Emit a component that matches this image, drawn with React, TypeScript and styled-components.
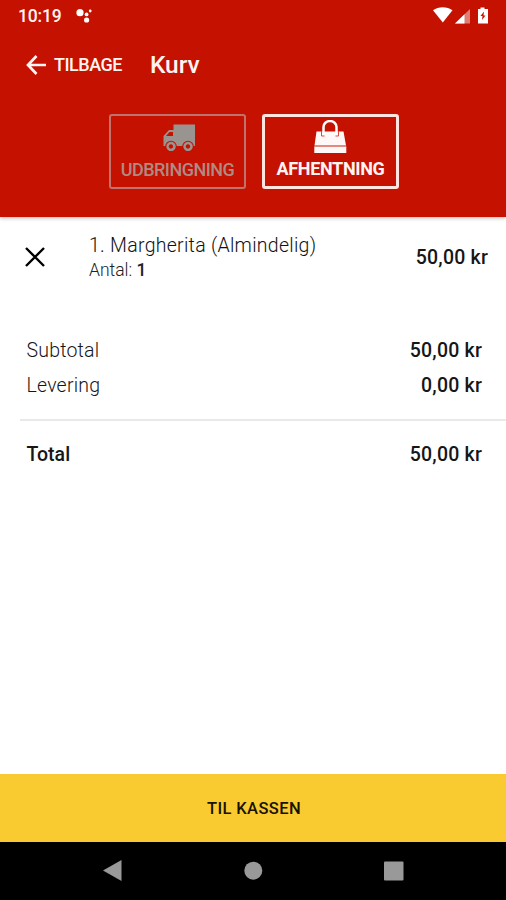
import React from "react";
import styled, { createGlobalStyle } from "styled-components";

const GlobalStyle = createGlobalStyle`
  *, *::before, *::after { box-sizing: border-box; }
  body { margin: 0; background: #fff; font-family: Roboto, sans-serif; }
  button { font-family: inherit; margin: 0; padding: 0; border: 0; background: none; cursor: pointer; }
  svg { display: block; flex: none; }
`;

const Screen = styled.div`
  display: flex;
  flex-direction: column;
  width: 506px;
  height: 900px;
  overflow: hidden;
  background: #fff;
  color: #161616;
`;

const Header = styled.header`
  flex: none;
  height: 217px;
  background: #c51100;
  color: #fff4f2;
  box-shadow: 0 1px 4px rgba(0, 0, 0, 0.3);
`;

const StatusBar = styled.div`
  display: flex;
  align-items: center;
  height: 32px;
  padding: 0 16px 0 18px;
`;

const Clock = styled.span`
  width: 58px;
  font-size: 17.5px;
  font-weight: 500;
  letter-spacing: -0.15px;
  line-height: 32px;
`;

const StatusIcons = styled.div`
  margin-left: auto;
  display: flex;
`;

const TitleBar = styled.div`
  display: flex;
  align-items: center;
  height: 65px;
  padding-left: 26px;
`;

const BackButton = styled.button`
  display: flex;
  align-items: center;
  gap: 7px;
  width: 124px;
  color: inherit;
  font-size: 18px;
  font-weight: 500;
  letter-spacing: -0.5px;
`;

const Title = styled.h1`
  margin: 0;
  font-size: 24.5px;
  font-weight: 500;
  letter-spacing: -0.1px;
`;

const Modes = styled.div`
  display: flex;
  justify-content: center;
  gap: 16px;
  padding-top: 17px;
  padding-left: 2px;
`;

const ModeButton = styled.button<{ $active?: boolean }>`
  display: flex;
  flex-direction: column;
  align-items: center;
  width: 137px;
  height: 75px;
  padding-top: 3px;
  border: ${(p) => (p.$active ? "3px solid #ffe4e1" : "2px solid #c0736c")};
  border-radius: 3px;
  color: ${(p) => (p.$active ? "#fff4f2" : "#b08a82")};
  font-size: 18px;
  font-weight: ${(p) => (p.$active ? 700 : 500)};
  letter-spacing: ${(p) => (p.$active ? "-0.35px" : "-0.5px")};
  line-height: 21px;
`;

const ModeLabel = styled.span<{ $drop: number }>`
  margin-top: ${(p) => p.$drop}px;
`;

const CartItem = styled.section`
  display: flex;
  align-items: center;
  height: 81px;
  padding: 0 18px 0 25px;
`;

const RemoveButton = styled.button`
  width: 64px;
  padding-bottom: 1px;
  color: #000;
`;

const ItemName = styled.div`
  font-size: 19.5px;
  font-weight: 300;
  letter-spacing: 0.28px;
  line-height: 25px;
  color: #111;
`;

const ItemCount = styled.div`
  font-size: 17.5px;
  font-weight: 300;
  line-height: 24px;
  color: #222;

  strong { font-weight: 500; }
`;

const Price = styled.span`
  margin-left: auto;
  font-size: 19.5px;
  font-weight: 500;
  letter-spacing: 0.2px;
`;

const Summary = styled.section`
  padding-top: 35px;
`;

const SummaryRow = styled.div<{ $strong?: boolean }>`
  display: flex;
  align-items: center;
  height: 35px;
  padding: 0 24px 0 26.5px;
  font-size: 19.5px;
  font-weight: ${(p) => (p.$strong ? 500 : 300)};
  letter-spacing: ${(p) => (p.$strong ? "0" : "0.2px")};
`;

const Divider = styled.hr`
  height: 2px;
  margin: 16px 0 16px 20px;
  border: 0;
  background: #e9e9e9;
`;

const Checkout = styled.button`
  flex: none;
  height: 68px;
  margin-top: auto;
  padding-left: 2px;
  background: #f9cb31;
  color: #181200;
  font-size: 16.5px;
  font-weight: 500;
  letter-spacing: 0.4px;
`;

const SystemNav = styled.nav`
  flex: none;
  display: flex;
  justify-content: space-between;
  height: 58px;
  padding: 18px 102px 0;
  background: #000;
`;

export default function App() {
  return (
    <>
      <GlobalStyle />
      <Screen>
        <Header>
          <StatusBar>
            <Clock>10:19</Clock>
            <svg width="18" height="18" viewBox="0 0 18 18" fill="#fff">
              <circle cx="4" cy="5.700" r="3.6" />
              <circle cx="10.600" cy="13" r="2.6" />
              <circle cx="10.6" cy="7.4" r="1.9" />
              <circle cx="14.2" cy="4" r="1.4" />
            </svg>
            <StatusIcons>
              <svg width="58" height="20" viewBox="0 0 58 20" fill="#fff">
                <path d="M1 4.2C6.5.2 15 .2 20.500 4.200L10.800 16.500Z" />
                <path d="M23 17.500 38 3V17.500Z" opacity=".45" />
                <path d="M23 17.500 32.500 8.300V17.500Z" />
                <path d="M48.500 1.500h4V3h3.500v14.500H46V3h2.500Z" />
                <path d="m52 5.500-3.500 4.500h2L50 14l3.500-4.500h-2Z" fill="#c51100" />
              </svg>
            </StatusIcons>
          </StatusBar>
          <TitleBar>
            <BackButton>
              <svg width="21" height="20" viewBox="0 0 21 20" fill="none" stroke="currentColor" strokeWidth="2.700">
                <path d="M10.500 1 2 10l8.500 9M2 10h18" />
              </svg>
              TILBAGE
            </BackButton>
            <Title>Kurv</Title>
          </TitleBar>
          <Modes>
            <ModeButton>
              <svg width="34" height="32" viewBox="0 0 34 32" fill="#9a9490">
                <path fillRule="evenodd" d="M12.500 5.500H34V27H2.500V17L8 11h4.500ZM5 17h7v-4H8.500Z" />
                <circle cx="10" cy="27.500" r="5.800" fill="#c51100" />
                <circle cx="27" cy="27.500" r="5.800" fill="#c51100" />
                <path fillRule="evenodd" d="M10 22.800a4.700 4.700 0 1 0 .1 0ZM10 25.300a2.200 2.200 0 1 1-.1 0ZM27 22.800a4.700 4.700 0 1 0 .1 0ZM27 25.300a2.200 2.200 0 1 1-.1 0Z" />
              </svg>
              <ModeLabel $drop={8}>UDBRINGNING</ModeLabel>
            </ModeButton>
            <ModeButton $active>
              <svg width="34" height="35" viewBox="0 0 34 35">
                <path fill="#fff8f7" d="M2.500 11.500H29.500L32 25.500H.5ZM.3 26.500h32v6.500H.3Z" />
                <path fill="#e88d84" d="M.5 25.500h31.700v1H.5Z" />
                <path fill="none" stroke="#d24c40" strokeWidth="1" d="M7.500 11v5h3M24.500 11v5h-3" />
                <path fill="none" stroke="#fff" strokeWidth="2.500" d="M9.500 15V7a6.500 6 0 0 1 13 0V15" />
              </svg>
              <ModeLabel $drop={3}>AFHENTNING</ModeLabel>
            </ModeButton>
          </Modes>
        </Header>

        <CartItem>
          <RemoveButton aria-label="Fjern">
            <svg width="20" height="20" viewBox="0 0 20 20" fill="none" stroke="currentColor" strokeWidth="2.400">
              <path d="m1 1 18 18M19 1 1 19" />
            </svg>
          </RemoveButton>
          <div>
            <ItemName>1. Margherita (Almindelig)</ItemName>
            <ItemCount>Antal: <strong>1</strong></ItemCount>
          </div>
          <Price>50,00 kr</Price>
        </CartItem>

        <Summary>
          <SummaryRow>Subtotal<Price>50,00 kr</Price></SummaryRow>
          <SummaryRow>Levering<Price>0,00 kr</Price></SummaryRow>
          <Divider />
          <SummaryRow $strong>Total<Price>50,00 kr</Price></SummaryRow>
        </Summary>

        <Checkout>TIL KASSEN</Checkout>
        <SystemNav>
          <svg width="20" height="22" viewBox="0 0 20 22" fill="#999"><path d="M19.500 0v21L1 10.500Z" /></svg>
          <svg width="20" height="22" viewBox="0 0 20 22" fill="#999"><circle cx="10.300" cy="10.700" r="9" /></svg>
          <svg width="20" height="22" viewBox="0 0 20 22" fill="#999"><rect y="1.500" width="19.500" height="19" rx="1" /></svg>
        </SystemNav>
      </Screen>
    </>
  );
}
